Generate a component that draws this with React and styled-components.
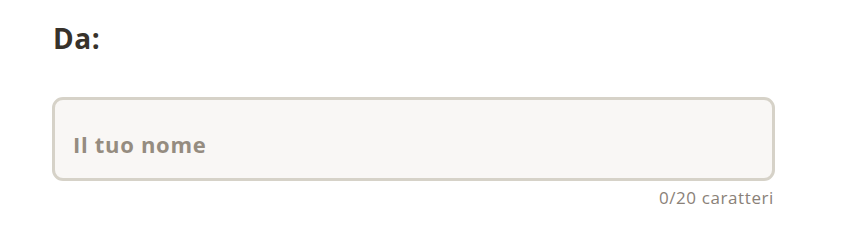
import styled, { createGlobalStyle } from "styled-components";

const GlobalStyle = createGlobalStyle`
  body {
    margin: 0;
    background: #ffffff;
    font-family: "Open Sans", "Noto Sans", sans-serif;
  }
`;

const Section = styled.div`
  width: 723px;
  padding: 21px 0 0 52px;
`;

const Heading = styled.h2`
  margin: 0 0 41px 1px;
  font-size: 28px;
  line-height: 35px;
  font-weight: 700;
  letter-spacing: 0.6px;
  color: #37322b;
`;

const Field = styled.div`
  display: flex;
  flex-direction: column;
`;

const Input = styled.input`
  box-sizing: border-box;
  width: 100%;
  height: 84px;
  padding: 22px 18px 12px;
  border: 3px solid #d6d2c8;
  border-radius: 11px;
  background: #f9f7f5;
  font-family: inherit;
  font-size: 22px;
  font-weight: 700;
  letter-spacing: 0.7px;
  color: #37322b;
  outline: none;

  &::placeholder {
    color: #958c80;
    opacity: 1;
  }
`;

const Counter = styled.span`
  align-self: flex-end;
  margin: 6px 1px 0 0;
  font-size: 17px;
  line-height: 22px;
  letter-spacing: 0.6px;
  color: #8a8178;
`;

const App = () => {
  return (
    <>
      <GlobalStyle />
      <Section>
        <Heading>Da:</Heading>
        <Field>
          <Input type="text" placeholder="Il tuo nome" maxLength={20} />
          <Counter>0/20 caratteri</Counter>
        </Field>
      </Section>
    </>
  );
};

export default App;
